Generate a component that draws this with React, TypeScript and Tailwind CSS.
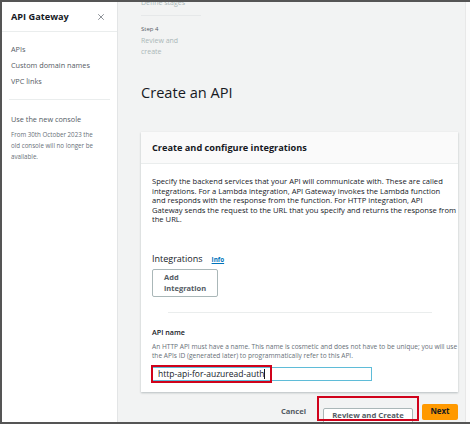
import { X } from "lucide-react";

export default function App() {
  return (
    <div className="w-[470px] h-[433px] bg-white overflow-hidden font-['Open_Sans',sans-serif] text-[#16191f]">
      <div className="flex h-[424px] border-t-2 border-l-2 border-b-2 border-[#555]">
        {/* Sidebar */}
        <aside className="w-[116px] shrink-0 bg-white border-r border-[#e3e5e6] flex flex-col">
          <div className="h-[30px] flex items-center justify-between pl-[9px] pr-[11px] border-b border-[#eaeded]">
            <span className="text-[9.2px] font-bold leading-none">API Gateway</span>
            <X size={10} strokeWidth={1.6} className="text-[#545b64]" />
          </div>
          <nav className="flex flex-col pl-[9px] pt-[9px] text-[7.3px] leading-[16px] text-[#545b64]">
            <span>APIs</span>
            <span>Custom domain names</span>
            <span>VPC links</span>
          </nav>
          <div className="mx-[7px] mt-[10px] border-t border-[#eaeded]" />
          <div className="pl-[9px] pr-[8px] pt-[13px]">
            <p className="text-[7.3px] leading-[12px] text-[#545b64]">Use the new console</p>
            <p className="mt-[4px] text-[6.2px] leading-[11px] text-[#687078] w-[90px]">
              From 30th October 2023 the old console will no longer be available.
            </p>
          </div>
        </aside>

        {/* Main */}
        <main className="flex-1 bg-[#f2f3f3] overflow-hidden pl-[23px] pr-[6px]">
          <div className="-mt-[5px] text-[7px] leading-[11px] text-[#aab7b8]">Define stages</div>
          <div className="mt-[7px] w-[60px] border-t border-[#e6e8e9]" />
          <div className="mt-[9px] text-[6px] leading-[9px] text-[#545b64]">Step 4</div>
          <div className="mt-[1px] text-[7px] leading-[11px] text-[#aab7b8]">
            Review and
            <br />
            create
          </div>
          <h1 className="mt-[25px] text-[14.6px] leading-[20px] text-[#16191f]">Create an API</h1>

          {/* Card */}
          <section className="mt-[30px] w-[317px] bg-white shadow-[0_1px_2px_rgba(0,28,36,0.25)]">
            <div className="h-[32px] flex items-center px-[11px] bg-[#fafafa] border-b border-[#eaeded]">
              <h2 className="text-[9.2px] font-bold leading-none">Create and configure integrations</h2>
            </div>
            <div className="px-[11px] pt-[13px] pb-[11px]">
              <p className="text-[7.6px] leading-[9.5px] text-[#16191f] whitespace-nowrap">
                Specify the backend services that your API will communicate with. These are called
                <br />
                integrations. For a Lambda integration, API Gateway invokes the Lambda function
                <br />
                and responds with the response from the function. For HTTP integration, API
                <br />
                Gateway sends the request to the URL that you specify and returns the response from
                <br />
                the URL.
              </p>

              <div className="mt-[27px] flex items-baseline gap-[9px]">
                <span className="text-[9px] leading-[13px]">Integrations</span>
                <span className="text-[6.3px] font-bold text-[#0073bb] underline">Info</span>
              </div>
              <button className="mt-[4px] block w-[66px] h-[28px] text-left px-[11px] border border-[#aab7b8] rounded-[2px] bg-white text-[7.5px] font-bold leading-[11px] text-[#545b64]">
                Add
                <br />
                integration
              </button>

              <div className="mt-[15px] ml-[16px] mr-[15px] border-t border-[#eaeded]" />

              <div className="mt-[14px] text-[7.2px] font-semibold leading-[10px]">API name</div>
              <p className="mt-[5px] text-[6.6px] leading-[9.3px] text-[#687078] whitespace-nowrap">
                An HTTP API must have a name. This name is cosmetic and does not have to be unique; you will use
                <br />
                the APIs ID (generated later) to programmatically refer to this API.
              </p>
              <div className="relative mt-[7px] w-[220px] h-[14px] border border-[#5fbcd8] flex items-center px-[5px] text-[8.5px] bg-white">
                <span>http-api-for-auzuread-auth</span>
                <span className="w-px h-[10px] bg-[#16191f]" />
                <div className="absolute -left-[2px] -top-[3px] w-[121px] h-[18px] border-2 border-[#d0021b]" />
              </div>
            </div>
          </section>

          {/* Actions */}
          <div className="mt-[8px] w-[317px] flex items-center justify-end">
            <span className="text-[7.6px] font-bold text-[#545b64] mr-[17px]">Cancel</span>
            <div className="relative">
              <button className="w-[90px] h-[15.5px] border border-[#aab7b8] rounded-[2px] bg-white text-[7.7px] font-bold text-[#545b64]">
                Review and Create
              </button>
              <div className="absolute -left-[6px] -top-[4px] w-[102px] h-[25px] border-2 border-[#d0021b]" />
            </div>
            <button className="ml-[9px] w-[36px] h-[15.5px] bg-[#f90] rounded-[2px] text-[7.9px] font-bold text-[#16191f]">
              Next
            </button>
          </div>
        </main>
        <div className="w-[5px] shrink-0 bg-[#fbfbfb] border-l border-[#e8e8e8]" />
      </div>
    </div>
  );
}
